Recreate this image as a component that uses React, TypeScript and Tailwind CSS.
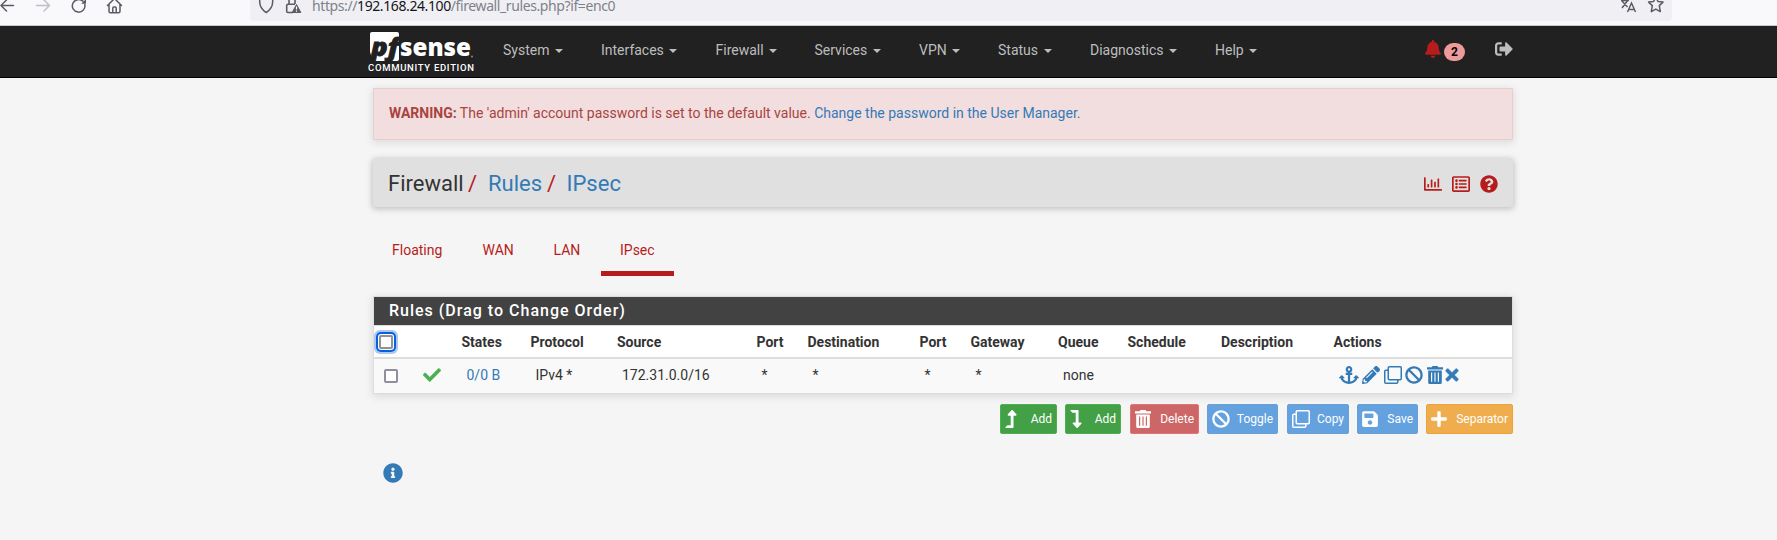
import React from "react";
import {
  FaAnchor, FaBan, FaBell, FaCheck, FaInfoCircle, FaLevelDownAlt, FaLevelUpAlt, FaPencilAlt, FaPlus,
  FaQuestionCircle, FaRegChartBar, FaRegListAlt, FaSave, FaSignOutAlt, FaTimes,
} from "react-icons/fa";

const menus = [
  { label: "System", width: "w-[98px]" },
  { label: "Interfaces", width: "w-[114.5px]" },
  { label: "Firewall", width: "w-[99px]" },
  { label: "Services", width: "w-[104.5px]" },
  { label: "VPN", width: "w-[79px]" },
  { label: "Status", width: "w-[92px]" },
  { label: "Diagnostics", width: "w-[125px]" },
  { label: "Help", width: "w-[60px]" },
];

const columns = [
  { title: "States", value: "0/0 B", link: true },
  { title: "Protocol", value: "IPv4 *" },
  { title: "Source", value: "172.31.0.0/16" },
  { title: "Port", value: "*" },
  { title: "Destination", value: "*" },
  { title: "Port", value: "*" },
  { title: "Gateway", value: "*" },
  { title: "Queue", value: "none" },
  { title: "Schedule", value: "" },
  { title: "Description", value: "" },
];

const rowGrid =
  "grid grid-cols-[48px_39.5px_69px_86.5px_139.5px_51px_112px_51px_87.5px_69.5px_93.5px_112.5px_1fr] items-center";

function CloneIcon({ className = "" }: { className?: string }) {
  return (
    <svg viewBox="0 0 18 18" fill="none" stroke="currentColor" strokeWidth="1.5" className={`size-[18px] ${className}`}>
      <rect x="4.25" y=".75" width="13" height="13" rx="1" />
      <path d="M4 4.25H1.75q-1 0-1 1v11q0 1 1 1h11q1 0 1-1V14" />
    </svg>
  );
}

function TrashIcon({ className = "" }: { className?: string }) {
  return (
    <svg viewBox="0 0 16 18" fill="currentColor" className={`h-[18px] w-4 ${className}`}>
      <path fillRule="evenodd" d="M5.5 0h5l.8 1.200H16v2.300H0V1.200h4.700zM1.200 4.500h13.600V16.500q0 1.500-1.500 1.500H2.700q-1.500 0-1.500-1.500zM4 6.500v9.300h1.200V6.500zm3.400 0v9.300h1.200V6.500zm3.400 0v9.300H12V6.500z" />
    </svg>
  );
}

function BrowserBar() {
  return (
    <div className="flex h-[26px] items-start overflow-hidden border-b border-[#c9c9d0] bg-[#f9f9fb] text-[#5b5b66]">
      <div className="flex w-[250px] shrink-0">
        <svg width="126" height="18" viewBox="0 0 126 18" fill="none" strokeWidth="1.5" strokeLinecap="round" strokeLinejoin="round">
          <path d="M13.5 5.500H1M6.500 0 1 5.500 6.500 11" stroke="#5b5b66" />
          <path d="M36.500 5.500h13M44 0l5.500 5.500L44 11" stroke="#bfbfc7" />
          <path d="M84.800 4.500A6.300 6.300 0 1 1 83 1.300" stroke="#5b5b66" />
          <path d="M86-1v4.800h-4.800z" fill="#5b5b66" />
          <path d="M107.500 5.500 114.500-1.500l7 7M109 4.500v6.700q0 1.500 1.500 1.500h8q1.500 0 1.500-1.500V4.500M112.800 12.500V8q0-1 1-1h1.400q1 0 1 1v4.500" stroke="#5b5b66" />
        </svg>
      </div>
      <div className="flex h-[21px] w-[1422px] rounded-b bg-[#f0f0f4]">
        <svg width="62" height="18" viewBox="250 0 62 18" fill="none" className="shrink-0">
          <path d="M259.700-1v2.500c0 5 2.500 8.500 6.500 11 4-2.500 6.500-6 6.500-11V-1" stroke="#5b5b66" strokeWidth="1.5" />
          <path d="M293 12.500h-5q-1.300 0-1.300-1.300V5.500q0-1.300 1.300-1.300h7M289-1v5M295-1v5" stroke="#5b5b66" strokeWidth="1.6" />
          <path d="M296.500 4.500 300.800 12.500h-8.600z" fill="#5b5b66" stroke="#5b5b66" strokeWidth="1" strokeLinejoin="round" />
          <path d="M296.500 6.500v3M296.500 10.500v1.200" stroke="#fff" strokeWidth="1.2" />
        </svg>
        <div className="-mt-[4px] h-[20px] w-[1308px] whitespace-nowrap font-['Noto_Sans',sans-serif] text-[14px] leading-[20px] tracking-[-0.4px] text-[#80808a]">
          https://<span className="text-[#15141a]">192.168.24.100</span>/firewall_rules.php?if=enc0
        </div>
        <svg width="46" height="18" viewBox="1620 0 46 18" fill="none" stroke="#5b5b66" strokeWidth="1.5">
          <path d="M1621 .5h8M1622 8l6-8M1622 1l5.500 6M1627.500 12l4-9 4 9M1629 9.500h5.500" />
          <path d="m1655.800-3 2.200 4.500 5 .6-3.700 3.500 1 6-4.500-2.500-4.500 2.500 1-6-3.700-3.500 5-.6z" strokeLinejoin="round" />
        </svg>
      </div>
    </div>
  );
}

function Logo() {
  return (
    <div className="-ml-[5px] flex w-[135px] shrink-0 flex-col pt-[6px]">
      <svg width="110" height="30" viewBox="368 32 110 30">
        <path d="M372 32h25q2 0 2 2v25q0 2-2 2h-24l-3-9V34q0-2 2-2z" fill="#fff" />
        <text x="371" y="55.5" fontFamily="Open Sans" fontWeight="800" fontStyle="italic" fontSize="24" textLength="28" lengthAdjust="spacingAndGlyphs" fill="#212121" stroke="#212121" strokeWidth="0.8">pf</text>
        <text x="400" y="55.5" fontFamily="Open Sans" fontWeight="800" fontSize="24" textLength="71" lengthAdjust="spacingAndGlyphs" fill="#fff">sense</text>
        <circle cx="472" cy="56.5" r="1" fill="#888" />
      </svg>
      <div className="whitespace-nowrap text-[9.5px] font-medium leading-[12px] tracking-[0.7px] text-white">COMMUNITY EDITION</div>
    </div>
  );
}

function NavBar() {
  return (
    <nav className="flex h-[52px] border-b border-black bg-[#212121] pl-[373px] text-[#bdbdbd]">
      <Logo />
      <div className="flex w-[922px] pt-[14px] leading-5">
        {menus.map((m) => (
          <div key={m.label} className={`flex shrink-0 items-center self-start ${m.width}`}>
            {m.label}
            <span className="ml-[5.5px] mt-px border-x-4 border-t-4 border-x-transparent border-t-[#bdbdbd]" />
          </div>
        ))}
      </div>
      <div className="flex items-start pt-[14px]">
        <FaBell className="h-[18px] w-4 text-[#b71c1c]" />
        <span className="ml-[3px] mt-[3px] flex h-[18px] w-[21px] items-center justify-center rounded-[10px] bg-[#ef9a9a] text-xs font-bold text-black">2</span>
        <FaSignOutAlt className="ml-[30px] size-[18px]" />
      </div>
    </nav>
  );
}

function PageHeader() {
  return (
    <header className="mt-[19px] flex h-12 items-center justify-between rounded-[3px] bg-[#e0e0e0] px-[15px] pt-px shadow-[0_1px_6px_1px_rgba(0,0,0,0.22)]">
      <h1 className="flex pt-px text-[22px] leading-6">
        <span className="w-[80px]">Firewall</span>
        <span className="w-[20px] text-[#b71c1c]">/</span>
        <span className="w-[59px] text-[#337ab7]">Rules</span>
        <span className="w-[19.5px] text-[#b71c1c]">/</span>
        <span className="text-[#337ab7]">IPsec</span>
      </h1>
      <div className="flex items-center gap-[10px] pt-px text-[18px] text-[#b71c1c]">
        <FaRegChartBar />
        <FaRegListAlt />
        <FaQuestionCircle />
      </div>
    </header>
  );
}

function Tabs() {
  return (
    <div className="mt-[24px] flex h-[45px] text-[#b71c1c]">
      <div className="w-[90.5px] pl-[19px] pt-[9px]">Floating</div>
      <div className="w-[71px] pl-[19px] pt-[9px]">WAN</div>
      <div className="w-[66.5px] pl-[19px] pt-[9px]">LAN</div>
      <div className="w-[73px] border-b-[5px] border-[#b71c1c] pl-[19px] pt-[9px]">IPsec</div>
    </div>
  );
}

function RulesTable() {
  return (
    <section className="mt-5 h-[98px] border border-[#ddd] bg-white shadow-[0_2px_8px_1px_rgba(0,0,0,0.1)]">
      <h2 className="h-7 bg-[#424242] pl-[15px] text-[16px] font-medium leading-[28px] tracking-[1px] text-white">
        Rules (Drag to Change Order)
      </h2>
      <div className={`${rowGrid} h-[34px] border-b-2 border-t border-[#ddd] font-bold`}>
        <span className="ml-[5px] size-[14px] rounded-[2px] border-2 border-[#8f8f9d] bg-white shadow-[0_0_0_1px_#fff,0_0_0_3px_#0561e0,0_0_0_5px_#b0c8f0]" />
        <span />
        {columns.map((c, i) => (
          <span key={i}>{c.title}</span>
        ))}
        <span>Actions</span>
      </div>
      <div className={`${rowGrid} h-[34px] bg-[#f9f9f9]`}>
        <span className="ml-[10px] size-[14px] rounded-[2px] border-2 border-[#8f8f9d] bg-white" />
        <FaCheck className="mb-[3px] ml-[0.5px] size-[18px] text-[#4caf50]" />
        {columns.map((c, i) => (
          <span key={i} className={c.link ? "pb-[2px] pl-[5px] text-[#337ab7]" : "pb-[2px] pl-[5px]"}>
            {c.value}
          </span>
        ))}
        <span className="flex h-[21px] items-start pl-[5px] text-[18px] text-[#337ab7]">
          <FaAnchor className="w-5" />
          <FaPencilAlt className="ml-[3px]" />
          <CloneIcon className="ml-[4px]" />
          <FaBan className="ml-[3px]" />
          <TrashIcon className="ml-[4px]" />
          <FaTimes className="ml-[2px] w-[14px]" stroke="currentColor" strokeWidth="22" />
        </span>
      </div>
    </section>
  );
}

function Toolbar() {
  const base = "flex h-[30px] items-center justify-between rounded-[2px] border px-[4px] text-xs text-white";
  const green = "border-[#4caf50] bg-[#43a047]";
  const blue = "border-[#6a9fd4] bg-[#64a1df]";
  return (
    <div className="ml-[627px] mt-[10px] flex">
      <button className={`${base} ${green} w-[57px]`}><FaLevelUpAlt className="-ml-px h-[18px] w-[14px]" />Add</button>
      <button className={`${base} ${green} ml-2 w-[56px]`}><FaLevelDownAlt className="-ml-px h-[18px] w-[14px]" />Add</button>
      <button className={`${base} ml-[9px] w-[69px] border-[#e57373] bg-[#cd6767]`}><TrashIcon />Delete</button>
      <button className={`${base} ${blue} ml-2 w-[71px]`}><FaBan className="size-[18px]" />Toggle</button>
      <button className={`${base} ${blue} ml-[9px] w-[62px]`}><CloneIcon />Copy</button>
      <button className={`${base} ${blue} ml-2 w-[61px]`}><FaSave className="h-[18px] w-4" />Save</button>
      <button className={`${base} ml-2 w-[87px] border-[#eea236] bg-[#f0ad4e]`}><FaPlus className="h-[18px] w-4" />Separator</button>
    </div>
  );
}

export default function App() {
  return (
    <div className="h-[540px] w-[1777px] overflow-hidden bg-[#f5f5f5] font-[Roboto,sans-serif] text-sm text-[#333]">
      <BrowserBar />
      <NavBar />
      <main className="ml-[373px] w-[1140px] pt-[10px]">
        <div className="flex h-[52px] items-center border border-[#ebccd1] bg-[#f2dede] px-[15px] text-[#a94442] shadow-[0_2px_8px_1px_rgba(0,0,0,0.1)]">
          <p className="-mt-[2px]">
            <b>WARNING:</b> The 'admin' account password is set to the default value.{" "}
            <a className="text-[#337ab7]">Change the password in the User Manager.</a>
          </p>
        </div>
        <PageHeader />
        <Tabs />
        <RulesTable />
        <Toolbar />
        <FaInfoCircle className="ml-[10px] mt-[29px] size-5 text-[#337ab7]" />
      </main>
    </div>
  );
}
